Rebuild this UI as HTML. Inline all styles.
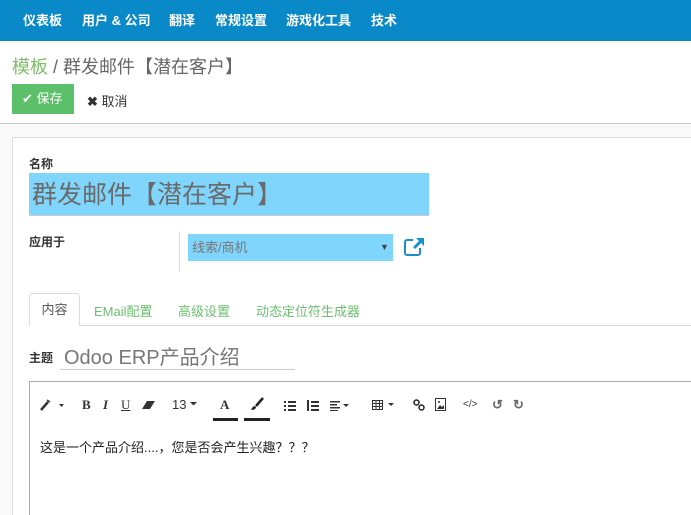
<!DOCTYPE html>
<html><head><meta charset="utf-8"><style>
*{margin:0;padding:0;box-sizing:border-box}
html,body{width:691px;height:515px;overflow:hidden}
body{background:#f9f9f9;font-family:"Liberation Sans","Noto Sans CJK SC",sans-serif;position:relative}
.a{position:absolute;white-space:nowrap}
.nav{left:0;top:0;width:691px;height:41px;background:#0a89c8}
.nav span{position:absolute;top:10px;color:#fff;font-weight:bold;font-size:13px}
.tb{position:absolute;top:397px;font-size:13px;color:#333}
</style></head><body>
<div class="a nav">
<span style="left:23px">仪表板</span><span style="left:82px">用户 &amp; 公司</span><span style="left:169px">翻译</span><span style="left:215px">常规设置</span><span style="left:286px">游戏化工具</span><span style="left:371px">技术</span>
</div>
<div class="a" style="left:0;top:41px;width:691px;height:83px;background:#fff;border-bottom:1px solid #ccc"></div>
<div class="a" style="left:12px;top:53px;font-size:18px;color:#666"><span style="color:#7fbf6a">模板</span> / 群发邮件【潜在客户】</div>
<div class="a" style="left:12px;top:84px;width:62px;height:30px;background:#5cc06a;color:#fff;font-size:13px;line-height:30px;padding-left:10px">✔ 保存</div>
<div class="a" style="left:87px;top:91px;font-size:13px;color:#333"><b>✖</b> 取消</div>
<div class="a" style="left:12px;top:137px;width:679px;height:378px;background:#fff;border:1px solid #ddd;border-right:none;border-bottom:none"></div>
<div class="a" style="left:29px;top:155px;font-size:12px;font-weight:bold;color:#333">名称</div>
<div class="a" style="left:29px;top:173px;width:400px;height:43px;background:#80d5fc;border-bottom:1px solid #ccc;font-size:25px;color:#6a6a6a;line-height:44px;padding-left:3px">群发邮件【潜在客户】</div>
<div class="a" style="left:29px;top:233px;font-size:12px;font-weight:bold;color:#333">应用于</div>
<div class="a" style="left:179px;top:232px;width:1px;height:40px;background:#ddd"></div>
<div class="a" style="left:188px;top:234px;width:205px;height:27px;background:#80d5fc;font-size:13px;color:#777;line-height:27px;padding-left:4px">线索/商机<span style="position:absolute;left:192px;top:0;font-size:9px;color:#444">▼</span></div>
<svg class="a" style="left:404px;top:237px" width="21" height="19" viewBox="0 0 21 19"><path d="M9 3H3a2 2 0 0 0-2 2v11a2 2 0 0 0 2 2h11a2 2 0 0 0 2-2v-5" fill="none" stroke="#1a8fcc" stroke-width="2"/><path d="M12 1h8v8l-3-3-6 6-2-2 6-6z" fill="#1a8fcc"/></svg>
<div class="a" style="left:29px;top:325px;width:662px;height:1px;background:#ddd"></div>
<div class="a" style="left:29px;top:293px;width:51px;height:33px;background:#fff;border:1px solid #ddd;border-bottom:none;border-radius:3px 3px 0 0;font-size:13px;color:#555;text-align:center;line-height:31px">内容</div>
<div class="a" style="left:94px;top:301px;font-size:13px;color:#6cc070">EMail配置</div>
<div class="a" style="left:178px;top:301px;font-size:13px;color:#6cc070">高级设置</div>
<div class="a" style="left:256px;top:301px;font-size:13px;color:#6cc070">动态定位符生成器</div>
<div class="a" style="left:29px;top:349px;font-size:12px;font-weight:bold;color:#333">主题</div>
<div class="a" style="left:60px;top:341px;width:235px;height:29px;border-bottom:1px solid #ccc;font-size:20px;color:#777;padding-left:4px">Odoo ERP产品介绍</div>
<div class="a" style="left:29px;top:381px;width:662px;height:134px;border:1px solid #aaa;border-right:none;border-bottom:none;background:#fff"></div>
<svg class="a" style="left:40px;top:399px" width="26" height="12" viewBox="0 0 26 12"><path d="M1 11L8 3" stroke="#333" stroke-width="2.5"/><path d="M7 1l3 2" stroke="#333" stroke-width="1.5"/><path d="M19 5h5l-2.5 3z" fill="#333"/></svg>
<span class="a tb" style="left:82px;font-family:'Liberation Serif';font-weight:bold">B</span>
<span class="a tb" style="left:103px;font-family:'Liberation Serif';font-style:italic;font-weight:bold">I</span>
<span class="a tb" style="left:121px;font-family:'Liberation Serif';text-decoration:underline">U</span>
<svg class="a" style="left:142px;top:400px" width="14" height="10" viewBox="0 0 14 10"><path d="M5 1h8l-5 8H0z" fill="#333"/></svg>
<span class="a tb" style="left:172px">13</span>
<svg class="a" style="left:190px;top:402px" width="8" height="4"><path d="M0 0h7l-3.5 3.5z" fill="#333"/></svg>
<span class="a tb" style="left:220px;font-family:'Liberation Serif';font-weight:bold">A</span>
<div class="a" style="left:213px;top:418px;width:25px;height:3px;background:#222"></div>
<svg class="a" style="left:250px;top:397px" width="14" height="14" viewBox="0 0 14 14"><path d="M13 1L6 9" stroke="#222" stroke-width="2.5"/><path d="M5 9c-2 0-3 2-4 4 3 0 5-1 5-3z" fill="#222"/></svg>
<div class="a" style="left:244px;top:418px;width:26px;height:3px;background:#222"></div>
<svg class="a" style="left:284px;top:400px" width="80" height="11" viewBox="0 0 80 11"><g fill="#333"><rect x="0" y="1" width="2" height="2"/><rect x="0" y="5" width="2" height="2"/><rect x="0" y="9" width="2" height="2"/><rect x="4" y="1" width="8" height="2"/><rect x="4" y="5" width="8" height="2"/><rect x="4" y="9" width="8" height="2"/><rect x="23" y="0" width="2" height="11"/><rect x="27" y="1" width="8" height="2"/><rect x="27" y="5" width="8" height="2"/><rect x="27" y="9" width="8" height="2"/><rect x="46" y="1" width="10" height="1.5"/><rect x="46" y="4" width="7" height="1.5"/><rect x="46" y="7" width="10" height="1.5"/><rect x="46" y="10" width="8" height="1"/><path d="M59 4h6l-3 3z"/></g></svg>
<svg class="a" style="left:372px;top:400px" width="26" height="10" viewBox="0 0 26 10"><rect x="0.5" y="0.5" width="10" height="9" fill="none" stroke="#333"/><path d="M0 3.5h11M0 6.5h11M4 0v10M7.5 0v10" stroke="#333"/><path d="M16 3h6l-3 3z" fill="#333"/></svg>
<svg class="a" style="left:413px;top:399px" width="12" height="12" viewBox="0 0 12 12"><circle cx="3.5" cy="3.5" r="2.5" fill="none" stroke="#222" stroke-width="1.5"/><circle cx="8.5" cy="8.5" r="2.5" fill="none" stroke="#222" stroke-width="1.5"/></svg>
<svg class="a" style="left:435px;top:398px" width="11" height="13" viewBox="0 0 11 13"><rect x="0.5" y="0.5" width="10" height="12" fill="none" stroke="#333"/><path d="M2 11l3-4 2 2 2-2v4z" fill="#333"/><circle cx="4" cy="4" r="1" fill="#333"/></svg>
<span class="a tb" style="left:463px;font-size:10px;top:399px">&lt;/&gt;</span>
<span class="a tb" style="left:492px;color:#666;font-weight:bold">↺</span><span class="a tb" style="left:513px;color:#666;font-weight:bold">↻</span>
<div class="a" style="left:40px;top:437px;font-size:13px;color:#222">这是一个产品介绍....，您是否会产生兴趣？？？</div>
</body></html>
